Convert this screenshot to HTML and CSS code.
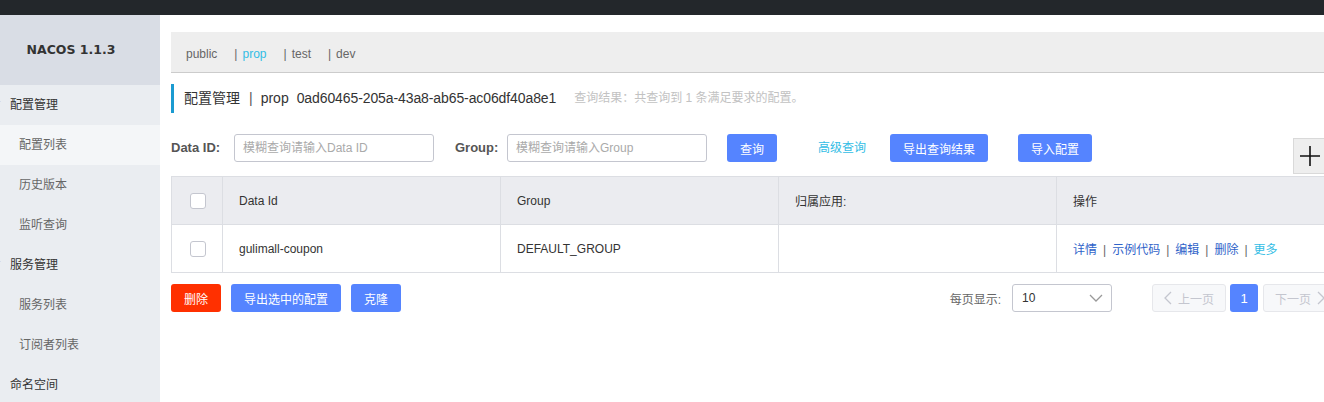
FILE: index.html
```html
<!DOCTYPE html>
<html lang="zh">
<head>
<meta charset="utf-8">
<title>Nacos</title>
<link rel="stylesheet" href="styles.css">
</head>
<body>
<div class="topbar"></div>
<div class="layout">
  <aside class="sidebar">
    <div class="logo">NACOS 1.1.3</div>
    <ul class="menu">
      <li class="group"><svg class="caret" width="8" height="8" viewBox="0 0 8 8"><path d="M1 2 L4 5 L7 2" fill="none" stroke="#6b8fc9" stroke-width="1.2"/></svg>配置管理</li>
      <li class="item active">配置列表</li>
      <li class="item">历史版本</li>
      <li class="item">监听查询</li>
      <li class="group"><svg class="caret" width="8" height="8" viewBox="0 0 8 8"><path d="M1 2 L4 5 L7 2" fill="none" stroke="#6b8fc9" stroke-width="1.2"/></svg>服务管理</li>
      <li class="item">服务列表</li>
      <li class="item">订阅者列表</li>
      <li class="group plain">命名空间</li>
    </ul>
  </aside>
  <main class="main">
    <div class="content">
      <div class="nsbar">
        <span class="ns">public</span>
        <span class="ns"><span class="sep">|</span><span class="cur">prop</span></span>
        <span class="ns"><span class="sep">|</span>test</span>
        <span class="ns"><span class="sep">|</span>dev</span>
      </div>
      <div class="title">
        <span class="t-main">配置管理</span>
        <span class="t-sep">|</span>
        <span class="t-ns">prop</span>
        <span class="t-id">0ad60465-205a-43a8-ab65-ac06df40a8e1</span>
        <span class="t-result">查询结果：共查询到 1 条满足要求的配置。</span>
      </div>
      <div class="search">
        <label class="lbl lbl-id">Data ID:</label>
        <div class="input">模糊查询请输入Data ID</div>
        <label class="lbl lbl-group">Group:</label>
        <div class="input">模糊查询请输入Group</div>
        <button class="btn btn-query">查询</button>
        <a class="adv">高级查询</a>
        <button class="btn btn-export">导出查询结果</button>
        <button class="btn btn-import">导入配置</button>
        <div class="plus"><svg width="22" height="22" viewBox="0 0 22 22"><path d="M11 1 V21 M1 11 H21" stroke="#111" stroke-width="1.6"/></svg></div>
      </div>
      <table class="grid">
        <colgroup>
          <col class="c-check"><col class="c-col"><col class="c-col"><col class="c-col"><col>
        </colgroup>
        <thead>
          <tr>
            <th class="chk"><span class="checkbox"></span></th>
            <th>Data Id</th>
            <th>Group</th>
            <th>归属应用:</th>
            <th>操作</th>
          </tr>
        </thead>
        <tbody>
          <tr>
            <td class="chk"><span class="checkbox"></span></td>
            <td>gulimall-coupon</td>
            <td>DEFAULT_GROUP</td>
            <td></td>
            <td class="ops"><a>详情</a><span class="bar">|</span><a>示例代码</a><span class="bar">|</span><a>编辑</a><span class="bar">|</span><a>删除</a><span class="bar">|</span><a class="more">更多</a></td>
          </tr>
        </tbody>
      </table>
      <div class="footer">
        <button class="btn btn-del">删除</button>
        <button class="btn btn-exsel">导出选中的配置</button>
        <button class="btn btn-clone">克隆</button>
        <span class="pagesize">每页显示:</span>
        <div class="select">10<svg class="chev" width="14" height="8" viewBox="0 0 14 8"><path d="M1 1 L7 7 L13 1" fill="none" stroke="#999" stroke-width="1.3"/></svg></div>
        <div class="pager">
          <span class="pg pg-prev"><svg width="8" height="14" viewBox="0 0 8 14"><path d="M7 1 L1 7 L7 13" fill="none" stroke="#c4c6cf" stroke-width="1.3"/></svg>上一页</span>
          <span class="pg pg-cur">1</span>
          <span class="pg pg-next">下一页<svg width="8" height="14" viewBox="0 0 8 14"><path d="M1 1 L7 7 L1 13" fill="none" stroke="#c4c6cf" stroke-width="1.3"/></svg></span>
        </div>
      </div>
    </div>
  </main>
</div>
</body>
</html>
```
FILE: styles.css
```css
html, body {
  margin: 0;
  padding: 0;
  width: 1324px;
  height: 402px;
  overflow: hidden;
  background: #fff;
  font-family: "Liberation Sans", "Noto Sans CJK SC", sans-serif;
  font-size: 12px;
  color: #333;
}

.topbar {
  height: 15px;
  background: #23272b;
}

.layout {
  display: flex;
  height: 387px;
}

.sidebar {
  width: 160px;
  flex: none;
  background: #eaedf1;
}

.logo {
  height: 70px;
  line-height: 70px;
  background: #d9dde5;
  text-align: center;
  font-family: "DejaVu Sans", sans-serif;
  font-weight: bold;
  font-size: 12.5px;
  color: #333;
  padding-right: 18px;
}

.menu {
  list-style: none;
  margin: 0;
  padding: 0;
}

.menu li {
  height: 40px;
  line-height: 41px;
  font-size: 12px;
  white-space: nowrap;
}

.menu .group {
  padding-left: 10px;
  color: #333;
  display: flex;
  align-items: center;
}

.caret {
  margin-left: -17px;
  margin-right: 9px;
  margin-top: -4px;
}

.menu .item {
  padding-left: 19px;
  color: #666;
}

.menu .item.active {
  background: #f4f6f8;
}

.main {
  flex: 1;
  padding: 17px 0 0 11px;
  overflow: hidden;
}

.content {
  width: 1166px;
}

.nsbar {
  height: 36px;
  padding-top: 4px;
  line-height: 36px;
  background: #eeeeee;
  border-bottom: 1px solid #cccccc;
  padding-left: 15px;
  color: #666;
  font-size: 12px;
  display: flex;
}

.ns {
  margin-right: 17px;
}

.ns .sep {
  margin-right: 5px;
  color: #666;
}

.ns .cur {
  color: #33bde5;
}

.title {
  margin-top: 11px;
  height: 29px;
  line-height: 29px;
  border-left: 3px solid #1b9bd1;
  padding-left: 10px;
  font-size: 14px;
  color: #333;
  display: flex;
  align-items: center;
  white-space: nowrap;
}

.t-sep {
  margin: 0 8px 0 9px;
  color: #555;
}

.t-ns {
  margin-right: 8px;
}

.t-id {
  letter-spacing: -0.1px;
}

.t-result {
  margin-left: 18px;
  font-size: 12px;
  color: #c2c2c2;
}

.search {
  margin-top: 21px;
  display: flex;
  align-items: flex-start;
  height: 40px;
}

.lbl {
  height: 28px;
  line-height: 28px;
  font-weight: bold;
  font-size: 13px;
  color: #555;
}

.lbl-id {
  width: 63px;
}

.lbl-group {
  width: 52px;
  margin-left: 21px;
}

.input {
  box-sizing: border-box;
  width: 200px;
  height: 28px;
  line-height: 26px;
  border: 1px solid #c4c6cf;
  border-radius: 3px;
  padding-left: 8px;
  color: #aaa;
  font-size: 12px;
}

.btn {
  box-sizing: border-box;
  height: 28px;
  border: none;
  border-radius: 3px;
  background: #5584ff;
  color: #fff;
  font-family: "Liberation Sans", "Noto Sans CJK SC", sans-serif;
  font-size: 12px;
  padding: 0;
  cursor: pointer;
}

.btn-query {
  width: 50px;
  margin-left: 20px;
}

.adv {
  height: 28px;
  line-height: 28px;
  margin-left: 41px;
  color: #33bde5;
  font-size: 12px;
}

.btn-export {
  width: 98px;
  margin-left: 24px;
}

.btn-import {
  width: 74px;
  margin-left: 30px;
}

.plus {
  box-sizing: border-box;
  margin-left: auto;
  margin-right: 10px;
  margin-top: 4px;
  width: 34px;
  height: 36px;
  background: #eeeeee;
  border: 1px solid #d9d9d9;
  display: flex;
  align-items: center;
  justify-content: center;
}

.grid {
  margin-top: 2px;
  width: 1166px;
  border-collapse: collapse;
  table-layout: fixed;
  border: 1px solid #dcdee3;
}

.c-check {
  width: 51px;
}

.c-col {
  width: 278px;
}

.grid th, .grid td {
  height: 47px;
  padding: 0 0 0 16px;
  text-align: left;
  font-weight: normal;
  font-size: 12px;
  color: #333;
  border: 1px solid #dcdee3;
  white-space: nowrap;
}

.grid thead th {
  background: #ebecf0;
}

.grid .chk {
  padding: 0;
  text-align: center;
}

.checkbox {
  display: inline-block;
  box-sizing: border-box;
  width: 16px;
  height: 16px;
  border: 1px solid #c4c6cf;
  border-radius: 3px;
  background: #fff;
  vertical-align: middle;
  margin-left: 1px;
}

.ops a {
  color: #2f63c9;
}

.ops .more {
  color: #33bde5;
}

.ops .bar {
  margin: 0 6px;
  color: #666;
}

.footer {
  margin-top: 11px;
  display: flex;
  align-items: center;
  height: 28px;
}

.btn-del {
  width: 50px;
  background: #ff3000;
}

.btn-exsel {
  width: 110px;
  margin-left: 10px;
}

.btn-clone {
  width: 50px;
  margin-left: 10px;
}

.pagesize {
  margin-left: auto;
  color: #666;
  font-size: 12px;
  margin-right: 11px;
}

.select {
  box-sizing: border-box;
  width: 100px;
  height: 28px;
  border: 1px solid #c4c6cf;
  border-radius: 3px;
  padding-left: 9px;
  display: flex;
  align-items: center;
  font-size: 12px;
  color: #333;
}

.chev {
  margin-left: auto;
  margin-right: 8px;
}

.pager {
  margin-left: 40px;
  display: flex;
  align-items: center;
}

.pg {
  box-sizing: border-box;
  height: 28px;
  border-radius: 3px;
  display: flex;
  align-items: center;
  justify-content: center;
  font-size: 12px;
}

.pg-prev, .pg-next {
  width: 74px;
  background: #f7f8fa;
  border: 1px solid #e6e7eb;
  color: #c4c6cf;
}

.pg-prev svg {
  margin-right: 6px;
}

.pg-next svg {
  margin-left: 6px;
}

.pg-cur {
  width: 28px;
  margin: 0 5px 0 4px;
  background: #5584ff;
  color: #fff;
  font-size: 13px;
}
```
